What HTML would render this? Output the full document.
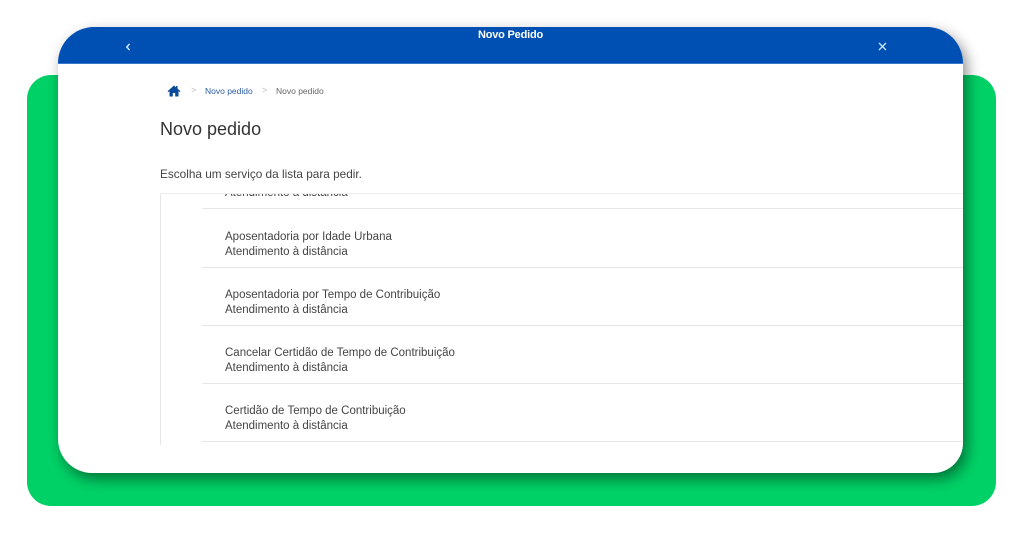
<!DOCTYPE html>
<html><head><meta charset="utf-8"><style>
*{margin:0;padding:0;box-sizing:border-box}
body{width:1024px;height:536px;background:#fff;position:relative;overflow:hidden;font-family:"Liberation Sans",sans-serif}
.green{position:absolute;left:27px;top:75px;width:969px;height:431px;background:#00d166;border-radius:24px}
.card{position:absolute;left:58px;top:27px;width:905px;height:446px;background:#fff;border-radius:36px 36px 30px 34px;overflow:hidden;box-shadow:4px 6px 14px rgba(0,0,0,.45)}
.hdr{position:absolute;left:0;top:0;width:905px;height:37px;background:#0050b4;border-bottom:1px solid #3a78c8}
.hdr .t{position:absolute;left:0;width:100%;top:2px;text-align:center;color:#fff;font-weight:bold;font-size:11px;letter-spacing:-.2px}
.ab{position:absolute;color:#cfe6ff}
.t1{position:absolute;color:#444;font-size:11.5px;line-height:15px;left:167px;white-space:nowrap}
.sep{position:absolute;left:144px;right:0;height:1px;background:#e6e6e6}
</style></head><body>
<div class="green"></div>
<div class="card">
 <div class="hdr">
  <svg class="ab" style="left:67px;top:16px" width="6" height="8" viewBox="0 0 6 8"><path d="M4.5 1L1.8 4 4.5 7" stroke="#cfe6ff" stroke-width="1.5" fill="none"/></svg>
  <div class="t">Novo Pedido</div>
  <svg class="ab" style="left:820px;top:15px" width="9" height="9" viewBox="0 0 9 9"><path d="M1 1L8 8M8 1L1 8" stroke="#cfe6ff" stroke-width="1.3"/></svg>
 </div>
 <svg style="position:absolute;left:109px;top:58px" width="14" height="12" viewBox="0 0 14 12"><path d="M7 0.5L0.5 6.2 1.5 7 2.5 6.2V11.5H5.8V8H8.2V11.5H11.5V6.2L12.5 7 13.5 6.2 10.5 3.6V1H9V2.3Z" fill="#0a4a9a"/></svg>
 <div style="position:absolute;left:133px;top:58px;font-size:9px;color:#bbb">&gt;</div>
 <div style="position:absolute;left:147px;top:59px;font-size:8.5px;color:#2a5ea8">Novo pedido</div>
 <div style="position:absolute;left:204px;top:58px;font-size:9px;color:#bbb">&gt;</div>
 <div style="position:absolute;left:218px;top:59px;font-size:8.5px;color:#666">Novo pedido</div>
 <div style="position:absolute;left:102px;top:92px;font-size:18px;color:#333">Novo pedido</div>
 <div style="position:absolute;left:102px;top:140px;font-size:11.8px;color:#444">Escolha um serviço da lista para pedir.</div>
 <div style="position:absolute;left:102px;top:166px;width:1px;height:252px;background:#e6e6e6"></div>
 <div style="position:absolute;left:102px;top:166px;right:0;height:1px;background:#eee"></div>
 <div style="position:absolute;left:102px;top:167px;right:0;height:7px;overflow:hidden"><div class="t1" style="top:-8px;left:65px">Atendimento à distância</div></div>
 <div class="sep" style="top:181px"></div>
 <div class="t1" style="top:203px">Aposentadoria por Idade Urbana<br>Atendimento à distância</div>
 <div class="sep" style="top:240px"></div>
 <div class="t1" style="top:261px">Aposentadoria por Tempo de Contribuição<br>Atendimento à distância</div>
 <div class="sep" style="top:298px"></div>
 <div class="t1" style="top:319px">Cancelar Certidão de Tempo de Contribuição<br>Atendimento à distância</div>
 <div class="sep" style="top:356px"></div>
 <div class="t1" style="top:377px">Certidão de Tempo de Contribuição<br>Atendimento à distância</div>
 <div class="sep" style="top:414px"></div>
</div>
</body></html>
